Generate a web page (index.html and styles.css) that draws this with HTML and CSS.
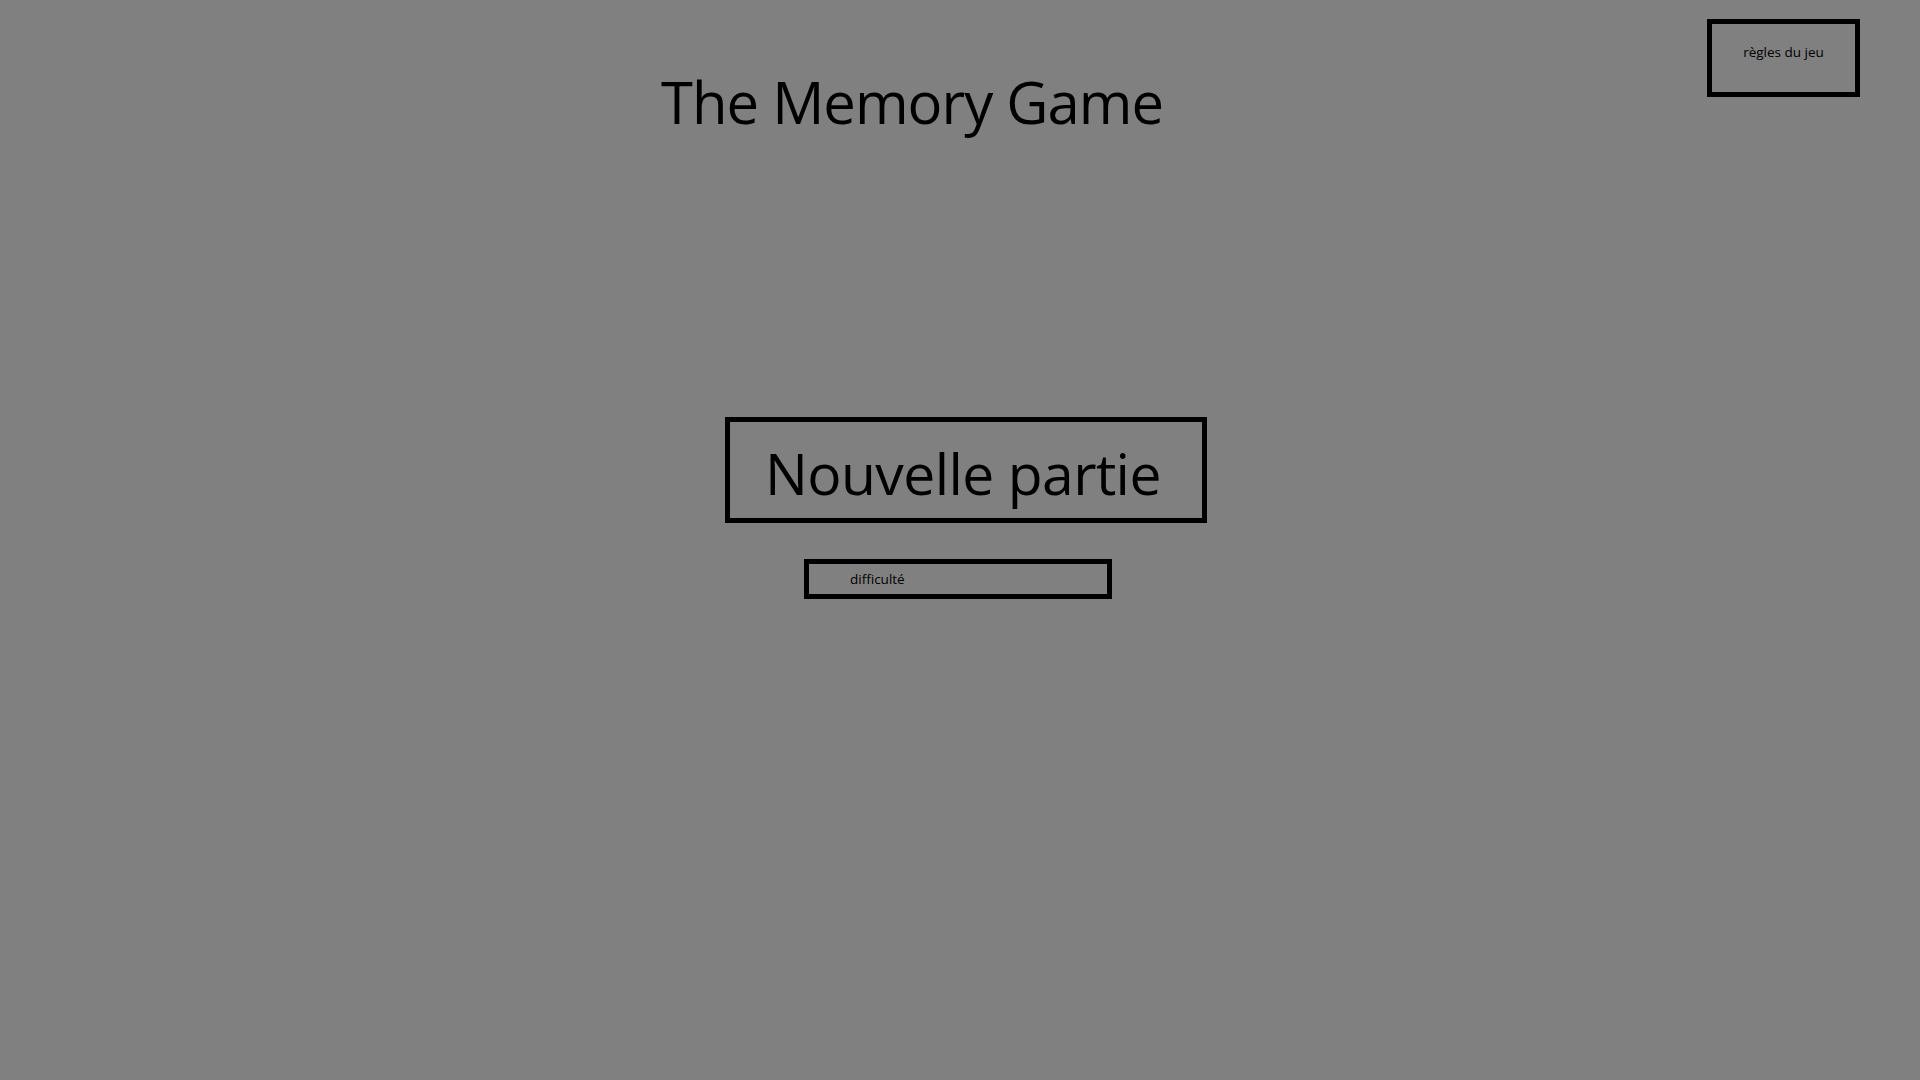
FILE: index.html
```html
<!DOCTYPE html>
<html lang="fr">
<head>
<meta charset="utf-8">
<title>The Memory Game</title>
<link rel="stylesheet" href="styles.css">
</head>
<body>
<header class="top">
  <h1 class="title">The Memory Game</h1>
  <a class="rules">règles du jeu</a>
</header>
<main class="menu">
  <button class="new-game">Nouvelle partie</button>
  <div class="difficulty">difficulté</div>
</main>
</body>
</html>
```
FILE: styles.css
```css
html, body {
  margin: 0;
  padding: 0;
}
body {
  background: #808080;
  width: 1920px;
  height: 1080px;
  overflow: hidden;
  font-family: "Open Sans", "Liberation Sans", sans-serif;
  color: #000;
}
.top {
  display: flex;
  justify-content: space-between;
  align-items: flex-start;
  padding: 19px 60px 0 661px;
}
.title {
  margin: 48px 0 0 0;
  font-size: 58px;
  font-weight: 400;
  line-height: 70px;
  letter-spacing: -1px;
}
.rules {
  box-sizing: border-box;
  width: 153px;
  height: 78px;
  border: 5px solid #000;
  font-size: 13.5px;
  color: #000;
  padding: 18px 0 0 0;
  display: block;
  text-align: center;
  line-height: 20px;
}
.menu {
  display: flex;
  flex-direction: column;
  align-items: flex-start;
  padding-top: 280px;
}
.new-game {
  box-sizing: border-box;
  margin-left: 725px;
  width: 482px;
  height: 106px;
  border: 5px solid #000;
  background: transparent;
  font-family: inherit;
  font-size: 57px;
  color: #000;
  padding: 3px 0 0 35px;
  text-align: left;
  letter-spacing: -0.6px;
  line-height: 96px;
}
.difficulty {
  box-sizing: border-box;
  margin-left: 804px;
  margin-top: 36px;
  width: 308px;
  height: 40px;
  border: 5px solid #000;
  font-size: 13.5px;
  padding: 5px 0 0 41px;
  line-height: 20px;
}
```
